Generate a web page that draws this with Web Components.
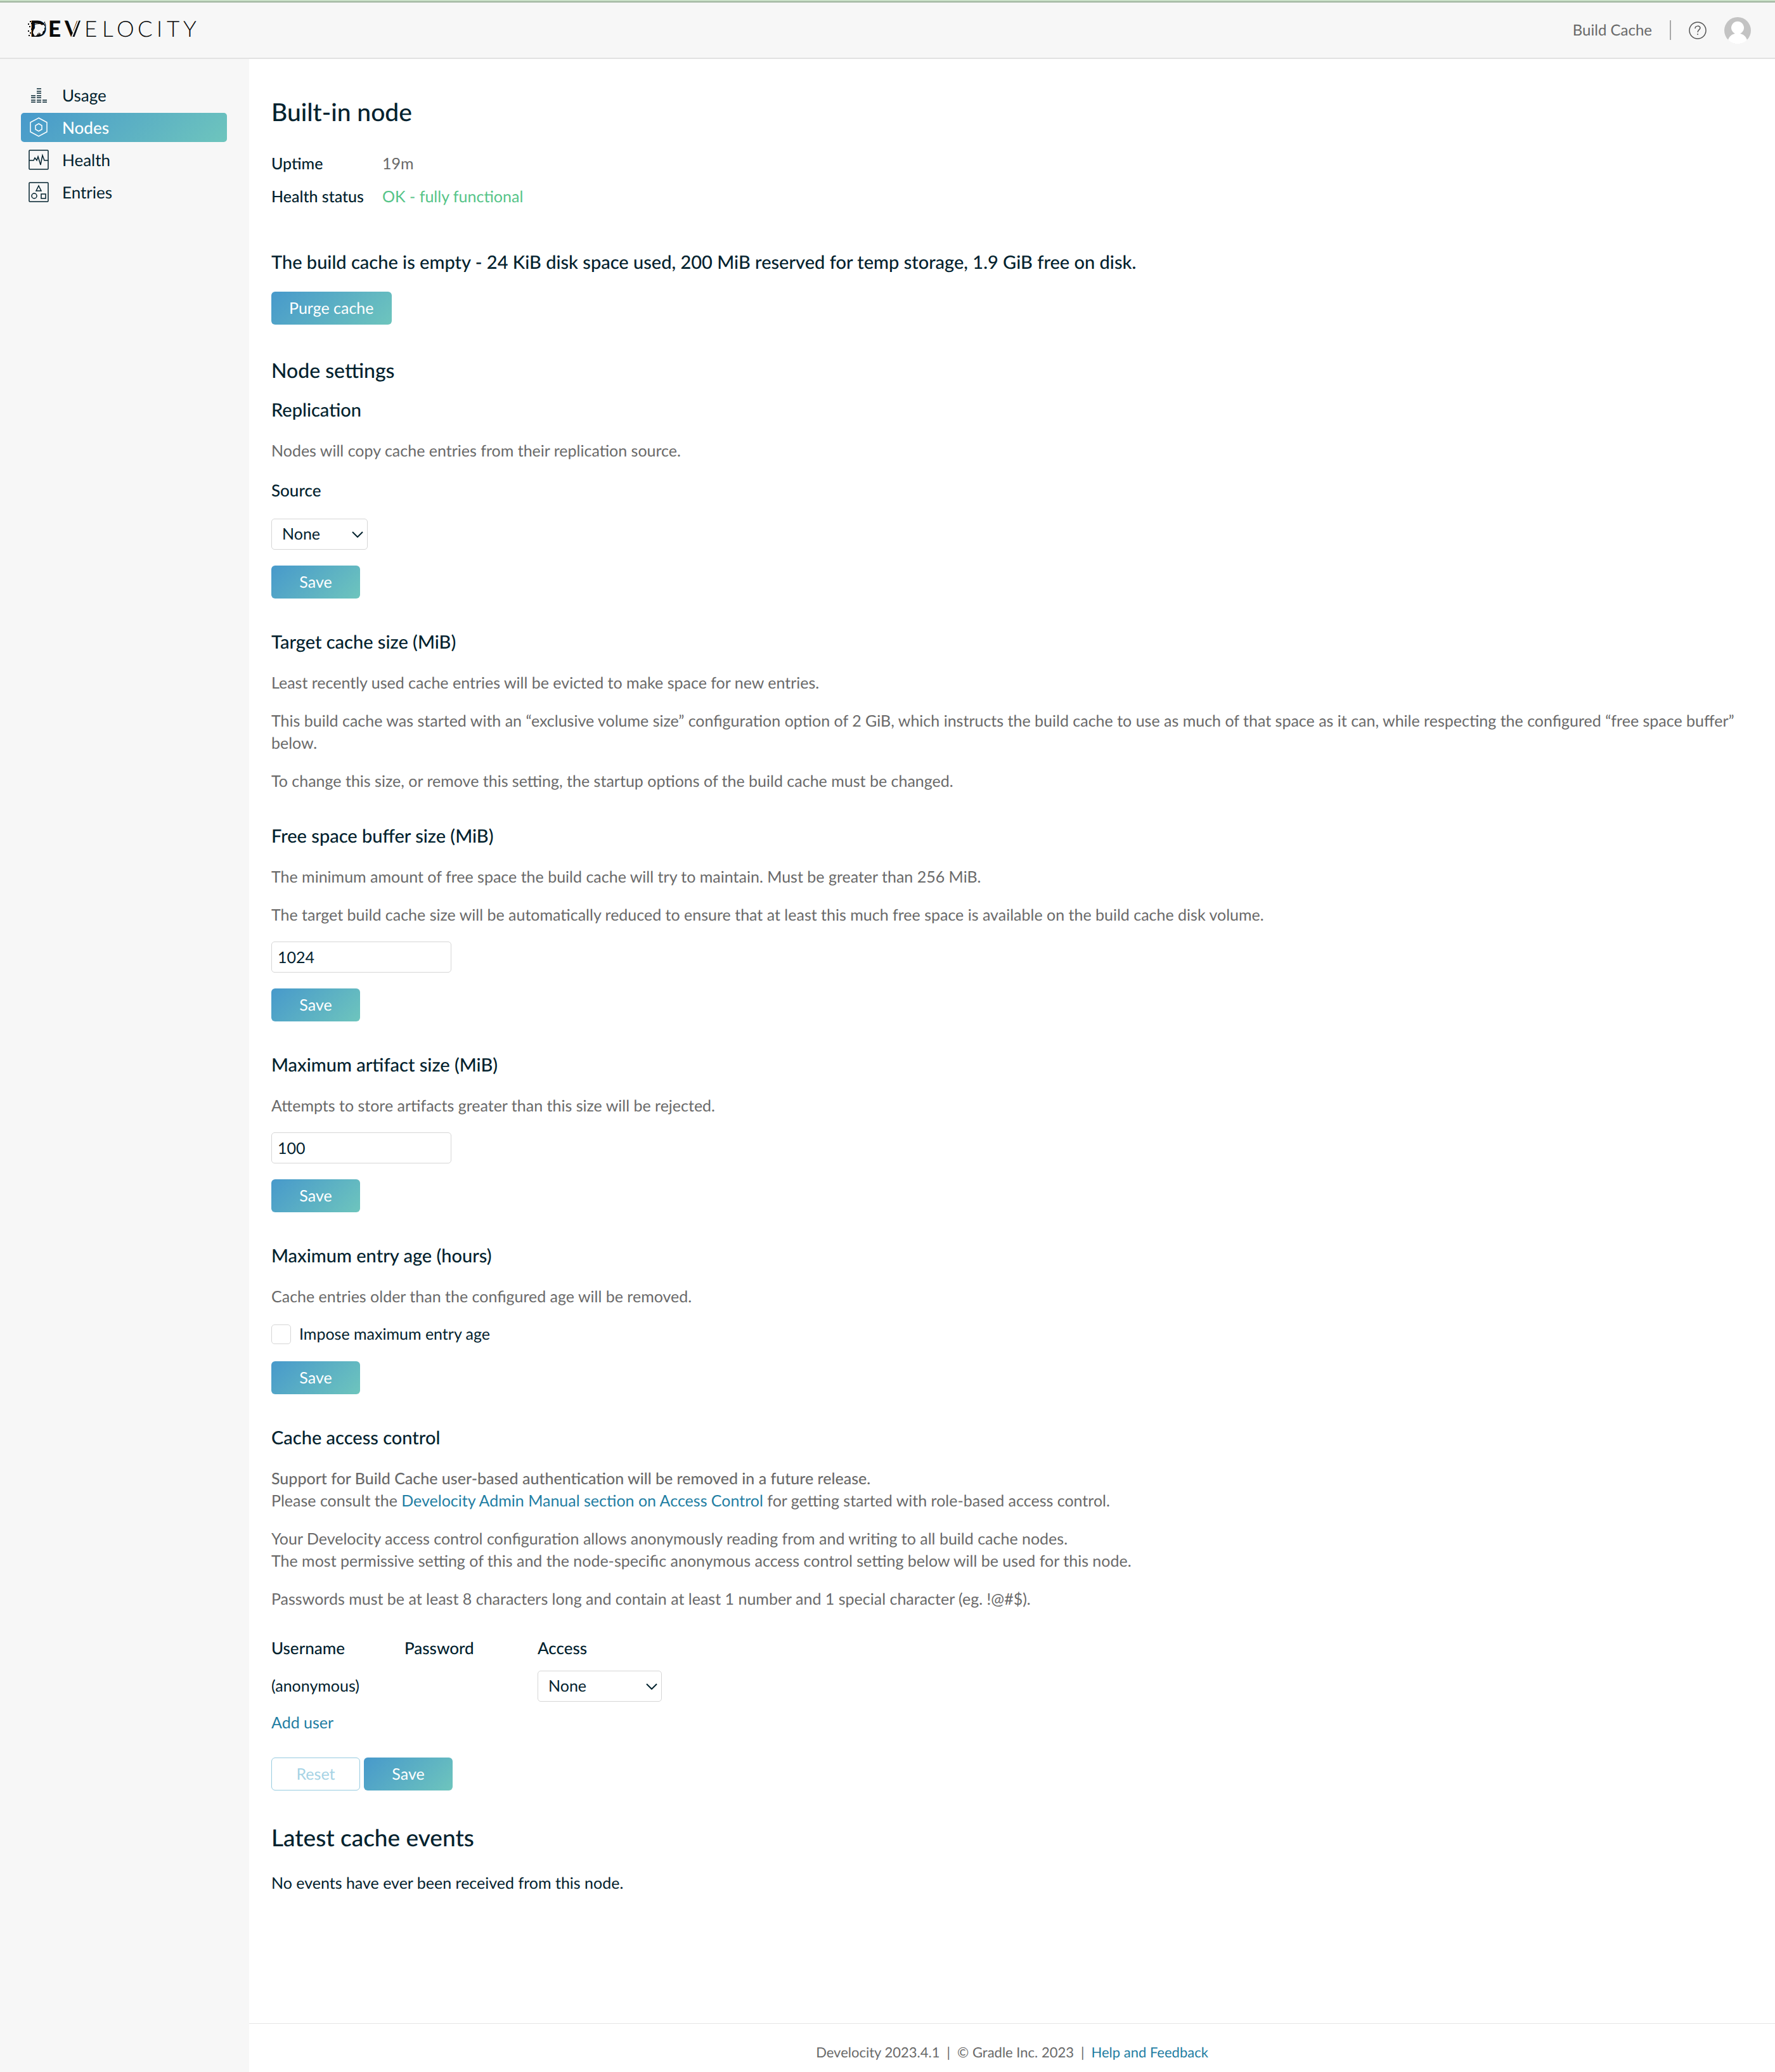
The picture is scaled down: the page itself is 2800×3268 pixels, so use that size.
<!DOCTYPE html>
<html lang="en">
<head>
<meta charset="utf-8">
<title>Develocity - Built-in node</title>
<style>
    body {
        margin: 0;
        background: #fff;
        color: #02222e;
        font: 25px/35px Lato, "Open Sans", sans-serif;
        text-rendering: geometricPrecision;
        --muted: #6a6a6a;
        --link: #1f7ea3;
        --ok: #55c488;
        --panel: #f7f7f7;
        --line: #d6d6d6;
        --gradient: linear-gradient(135deg, #4799cb, #6ec5bd);
    }
</style>
</head>
<body>
<build-cache-app></build-cache-app>

<script>
class BaseElement extends HTMLElement {
    constructor() {
        super()
        this.attachShadow({ mode: 'open' })
    }
    getMarkup() {
        return ''
    }
    getStyles() {
        return ''
    }
    render() {
        const template = document.createElement('template')
        template.innerHTML = `
            <style>
                *, *::before { box-sizing: border-box; }
                ${this.getStyles()}
            </style>
            ${this.getMarkup()}
        `
        this.shadowRoot.replaceChildren(template.content.cloneNode(true))
    }
    connectedCallback() {
        this.render()
    }
}

class BrandLogo extends BaseElement {
    getMarkup() {
        return `
            <svg width="270" height="51" viewBox="44 22 270 51" role="img" aria-label="Develocity">
                <g font-family="Lato" font-size="35" fill="#0a0a0a">
                    <text y="58" x="47 76 102" font-weight="900">DEV</text>
                    <text y="58" x="133 161 184 217 247 263 289" font-weight="300">ELOCITY</text>
                </g>
                <path d="M57 43c3-4 8-3 12-4l2 3-1 6c-2 1-3 2-3 5l-3 2c0-3-4-3-5 0l-4 2-3-5c0-4 2-7 5-9z" fill="#f7f7f7"/>
                <path d="M51 41c4-4 9-3 14-4 5 0 7-2 5-3M59 55c0-3 4-4 5-1M70 46c2-3 3-8 0-11" fill="none" stroke="#0a0a0a"/>
                <path d="M44 38h2M47 34h2M46 42h2M49 46h2M44 49h2M47 52h2M45 56h2M49 37h2" stroke="#0a0a0a" stroke-width="2"/>
                <path d="M124 31l-11 28" stroke="#f7f7f7" stroke-width="2"/>
                <path d="M126 33l-9 25M106 33l8 20" stroke="#0a0a0a"/>
                <path d="M109 33l7 18" stroke="#f7f7f7"/>
            </svg>
        `
    }
    getStyles() {
        return `
            :host { display: block; }
            svg { display: block; }
        `
    }
}

class AppHeader extends BaseElement {
    getMarkup() {
        return `
            <header>
                <brand-logo></brand-logo>
                <nav>
                    <a href="#cache">Build Cache</a>
                    <span class="divider"></span>
                    <a href="#help" aria-label="Help">
                        <svg width="28" height="28" viewBox="0 0 28 28" fill="none" stroke="#555" stroke-width="1.5">
                            <circle cx="14" cy="14" r="13"/>
                            <path d="M10 11c0-5 8-5 8-1 0 3-4 3-4 7"/>
                            <path d="M14 19v2"/>
                        </svg>
                    </a>
                    <a href="#account" aria-label="Account">
                        <svg width="42" height="42" viewBox="0 0 42 42">
                            <circle cx="21" cy="21" r="21" fill="#c3c3c3"/>
                            <path d="M6 36c2-6 6-9 11-10a10 10 0 1 1 8 0c5 1 9 4 11 10a21 21 0 0 1-30 0z" fill="#fff"/>
                        </svg>
                    </a>
                </nav>
            </header>
        `
    }
    getStyles() {
        return `
            :host { display: block; }
            header {
                display: flex;
                align-items: center;
                justify-content: space-between;
                height: 93px;
                padding: 2px 38px 0 44px;
                background: var(--panel);
                border-top: 2px solid #c8dfc6;
                border-bottom: 2px solid #e2e2e2;
                box-shadow: inset 0 2px #9fb39f;
            }
            nav { display: flex; align-items: center; font-size: 24px; }
            a { color: var(--muted); text-decoration: none; }
            a svg { display: block; }
            .divider { width: 2px; height: 31px; margin: 0 28px; background: #a8a8a8; }
            a + a { margin-left: 28px; }
        `
    }
}

const icons = {
    usage: `<path d="M4 17h7M4 20h7M4 24h7M4 27h7M13 6h7M13 10h7M13 13h7M13 17h7M13 20h7M13 24h7M13 27h7M22 24h7M22 27h7"/>`,
    nodes: `<path d="M16 1l13 7v15l-13 7-13-7V8z"/><path d="M16 10l5 3v6l-5 3-5-3v-6z"/>`,
    health: `<rect x="1" y="1" width="30" height="30" rx="1"/><path d="M1 17h7l2-4 3 4 2-6 4 13 3-15 3 8h6"/>`,
    entries: `<rect x="1" y="1" width="30" height="30" rx="1"/><path d="M16 6l4 8h-8z"/><circle cx="9" cy="22" r="4"/><path d="M20 19h7v7h-7z"/>`
}

class NavItem extends BaseElement {
    getMarkup() {
        return `
            <a href="#${this.getAttribute('icon')}">
                <svg width="32" height="32" viewBox="0 0 32 32" fill="none" stroke="currentColor" stroke-width="1.5">
                    ${icons[this.getAttribute('icon')]}
                </svg>
                <slot></slot>
            </a>
        `
    }
    getStyles() {
        return `
            :host { display: block; }
            a {
                display: flex;
                align-items: center;
                gap: 21px;
                height: 46px;
                padding-left: 12px;
                border-radius: 5px;
                color: inherit;
                font-size: 26px;
                text-decoration: none;
            }
            :host([active]) a {
                background: var(--gradient);
                color: #fff;
                font-weight: 500;
            }
        `
    }
}

class AppSidebar extends BaseElement {
    getMarkup() {
        return `
            <nav>
                <nav-item icon="usage">Usage</nav-item>
                <nav-item icon="nodes" active>Nodes</nav-item>
                <nav-item icon="health">Health</nav-item>
                <nav-item icon="entries">Entries</nav-item>
            </nav>
        `
    }
    getStyles() {
        return `
            :host { display: block; background: var(--panel); }
            nav {
                display: grid;
                gap: 5px;
                padding: 34px 35px 34px 33px;
            }
        `
    }
}

class CacheButton extends BaseElement {
    getMarkup() {
        const disabled = this.hasAttribute('disabled') ? 'disabled' : ''
        return `<button type="button" ${disabled}><slot></slot></button>`
    }
    getStyles() {
        return `
            :host { display: inline-block; vertical-align: top; }
            button {
                display: block;
                min-width: 140px;
                height: 52px;
                padding: 0 28px;
                border: 0;
                border-radius: 6px;
                background: var(--gradient);
                color: #fff;
                font: inherit;
                text-rendering: inherit;
            }
            button:disabled {
                border: 1px solid #96cbe0;
                background: #fff;
                color: #a6d3e5;
            }
        `
    }
}

class CacheSelect extends BaseElement {
    getMarkup() {
        const label = this.getAttribute('label')
        const name = this.getAttribute('name')
        return `
            ${label ? `<label for="choice">${label}</label>` : ''}
            <div class="box">
                <select id="choice" ${name ? `aria-label="${name}"` : ''}>
                    <option>None</option>
                </select>
                <svg width="18" height="10" viewBox="0 0 18 10" fill="none" stroke="currentColor" stroke-width="2">
                    <path d="M1 1l8 8 8-8"/>
                </svg>
            </div>
        `
    }
    getStyles() {
        return `
            :host { display: block; --select-width: 152px; }
            :host([wide]) { --select-width: 196px; }
            label {
                display: block;
                margin-bottom: 27px;
                font-size: 26px;
                font-weight: 500;
            }
            .box {
                display: grid;
                align-items: center;
                width: var(--select-width);
            }
            select, svg { grid-area: 1 / 1; }
            select {
                appearance: none;
                height: 49px;
                padding: 0 40px 0 16px;
                border: 1px solid var(--line);
                border-radius: 5px;
                background: #fff;
                color: inherit;
                font: inherit;
                text-rendering: inherit;
            }
            svg { justify-self: end; margin-right: 7px; pointer-events: none; }
        `
    }
}

class SettingSection extends BaseElement {
    getMarkup() {
        const value = this.getAttribute('value')
        const title = this.getAttribute('heading')
        return `
            <h3>${value ? `<label for="value">${title}</label>` : title}</h3>
            <div class="text"><slot></slot></div>
            ${value ? `<input id="value" type="text" value="${value}">` : ''}
            <slot name="control"></slot>
            ${this.hasAttribute('save') ? '<cache-button>Save</cache-button>' : ''}
        `
    }
    getStyles() {
        return `
            :host { display: flex; flex-direction: column; align-items: flex-start; margin-bottom: 52px; }
            h3 {
                margin: 0 0 30px;
                font-size: 29px;
                font-weight: 500;
                line-height: 34px;
            }
            .text {
                display: grid;
                gap: 25px;
                color: var(--muted);
            }
            .text ::slotted(p) { margin: 0; }
            input {
                width: 284px;
                height: 49px;
                margin-top: 24px;
                padding: 0 9px;
                border: 1px solid var(--line);
                border-radius: 5px;
                color: inherit;
                font: inherit;
                text-rendering: inherit;
            }
            cache-button { margin-top: 25px; }
        `
    }
}

class AgeCheckbox extends BaseElement {
    getMarkup() {
        return `
            <input id="impose" type="checkbox">
            <label for="impose"><slot></slot></label>
        `
    }
    getStyles() {
        return `
            :host {
                display: flex;
                align-items: center;
                gap: 13px;
                margin-top: 24px;
            }
            input {
                appearance: none;
                width: 31px;
                height: 31px;
                margin: 0;
                border: 1px solid var(--line);
                border-radius: 5px;
                background: #fff;
            }
        `
    }
}

class NodeStatus extends BaseElement {
    getMarkup() {
        return `
            <h1>Built-in node</h1>
            <dl>
                <dt>Uptime</dt>
                <dd>19m</dd>
                <dt>Health status</dt>
                <dd class="ok">OK - fully functional</dd>
            </dl>
            <p>The build cache is empty - 24 KiB disk space used, 200 MiB reserved for temp storage, 1.9 GiB free on disk.</p>
            <cache-button>Purge cache</cache-button>
        `
    }
    getStyles() {
        return `
            :host { display: block; margin-bottom: 53px; }
            h1 {
                margin: 0 0 42px;
                font-size: 39px;
                font-weight: 500;
                line-height: 44px;
            }
            dl {
                display: grid;
                grid-template-columns: 175px 1fr;
                row-gap: 17px;
                margin: 0 0 69px;
            }
            dt { font-weight: 500; }
            dd { margin: 0; color: var(--muted); }
            .ok { color: var(--ok); }
            p {
                margin: 0 0 29px;
                font-size: 29px;
                font-weight: 500;
                line-height: 34px;
            }
        `
    }
}

class UserTable extends BaseElement {
    getMarkup() {
        return `
            <table>
                <thead>
                    <tr><th>Username</th><th>Password</th><th>Access</th></tr>
                </thead>
                <tbody>
                    <tr>
                        <td>(anonymous)</td>
                        <td></td>
                        <td><cache-select wide name="Access"></cache-select></td>
                    </tr>
                </tbody>
            </table>
            <a href="#add-user">Add user</a>
            <div class="actions">
                <cache-button disabled>Reset</cache-button>
                <cache-button>Save</cache-button>
            </div>
        `
    }
    getStyles() {
        return `
            :host { display: block; margin-top: 42px; }
            table { border-collapse: collapse; margin-bottom: 16px; }
            th, td { min-width: 210px; padding: 0; text-align: left; }
            th { padding-bottom: 18px; font-size: 26px; font-weight: 500; }
            a { color: var(--link); text-decoration: none; }
            .actions { display: flex; gap: 6px; margin-top: 37px; }
        `
    }
}

class NodePage extends BaseElement {
    getMarkup() {
        return `
            <main>
                <node-status></node-status>
                <h2>Node settings</h2>

                <setting-section heading="Replication" save>
                    <p>Nodes will copy cache entries from their replication source.</p>
                    <cache-select slot="control" class="source" label="Source"></cache-select>
                </setting-section>

                <setting-section heading="Target cache size (MiB)">
                    <p>Least recently used cache entries will be evicted to make space for new entries.</p>
                    <p>This build cache was started with an “exclusive volume size” configuration option of 2 GiB, which instructs the build cache to use as much of that space as it can, while respecting the configured “free space buffer” below.</p>
                    <p>To change this size, or remove this setting, the startup options of the build cache must be changed.</p>
                </setting-section>

                <setting-section heading="Free space buffer size (MiB)" value="1024" save>
                    <p>The minimum amount of free space the build cache will try to maintain. Must be greater than 256 MiB.</p>
                    <p>The target build cache size will be automatically reduced to ensure that at least this much free space is available on the build cache disk volume.</p>
                </setting-section>

                <setting-section heading="Maximum artifact size (MiB)" value="100" save>
                    <p>Attempts to store artifacts greater than this size will be rejected.</p>
                </setting-section>

                <setting-section heading="Maximum entry age (hours)" save>
                    <p>Cache entries older than the configured age will be removed.</p>
                    <age-checkbox slot="control">Impose maximum entry age</age-checkbox>
                </setting-section>

                <setting-section heading="Cache access control">
                    <p>
                        <strong>Support for Build Cache user-based authentication will be removed in a future release.</strong><br>
                        Please consult the <a href="#manual">Develocity Admin Manual section on Access Control</a> for getting started with role-based access control.
                    </p>
                    <p>
                        Your Develocity access control configuration allows anonymously reading from and writing to all build cache nodes.<br>
                        The most permissive setting of this and the node-specific anonymous access control setting below will be used for this node.
                    </p>
                    <p>Passwords must be at least 8 characters long and contain at least 1 number and 1 special character (eg. !@#$).</p>
                    <user-table slot="control"></user-table>
                </setting-section>

                <h2 class="events">Latest cache events</h2>
                <p class="empty">No events have ever been received from this node.</p>
            </main>
        `
    }
    getStyles() {
        return `
            :host { display: block; }
            main { padding: 62px 35px 60px; }
            h2 {
                margin: 0 0 27px;
                font-size: 32px;
                font-weight: 500;
                line-height: 38px;
            }
            .events {
                margin-bottom: 33px;
                font-size: 37px;
                line-height: 44px;
            }
            .source { margin-top: 27px; }
            strong { font-weight: 500; }
            a { color: var(--link); text-decoration: none; }
            .empty { margin: 0; }
        `
    }
}

class AppFooter extends BaseElement {
    getMarkup() {
        return `
            <footer>
                <span>Develocity 2023.4.1</span>
                <span>|</span>
                <span>© Gradle Inc. 2023</span>
                <span>|</span>
                <a href="#feedback">Help and Feedback</a>
            </footer>
        `
    }
    getStyles() {
        return `
            :host { display: block; }
            footer {
                display: flex;
                justify-content: center;
                gap: 11px;
                padding: 27px 0 14px;
                border-top: 1px solid #e6e6e6;
                color: var(--muted);
                font-size: 22px;
            }
            a { color: var(--link); text-decoration: none; }
        `
    }
}

class BuildCacheApp extends BaseElement {
    getMarkup() {
        return `
            <app-header></app-header>
            <app-sidebar></app-sidebar>
            <node-page></node-page>
            <app-footer></app-footer>
        `
    }
    getStyles() {
        return `
            :host {
                display: grid;
                grid-template: "header header" auto "side page" 1fr "side footer" auto / 393px 1fr;
                min-height: 100vh;
            }
            app-header { grid-area: header; }
            app-sidebar { grid-area: side; }
            node-page { grid-area: page; }
            app-footer { grid-area: footer; }
        `
    }
}

customElements.define('brand-logo', BrandLogo)
customElements.define('app-header', AppHeader)
customElements.define('nav-item', NavItem)
customElements.define('app-sidebar', AppSidebar)
customElements.define('cache-button', CacheButton)
customElements.define('cache-select', CacheSelect)
customElements.define('setting-section', SettingSection)
customElements.define('age-checkbox', AgeCheckbox)
customElements.define('node-status', NodeStatus)
customElements.define('user-table', UserTable)
customElements.define('node-page', NodePage)
customElements.define('app-footer', AppFooter)
customElements.define('build-cache-app', BuildCacheApp)
</script>
</body>
</html>
